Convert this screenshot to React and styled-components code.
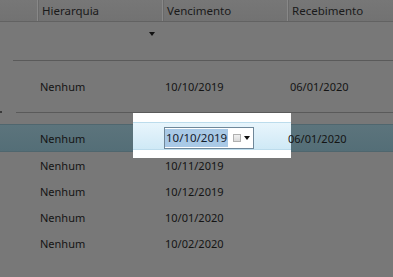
import React from "react";
import styled, { createGlobalStyle } from "styled-components";

const Global = createGlobalStyle`
  html, body { margin: 0; padding: 0; background: #787878; overflow: hidden; }
  body { font-family: "Noto Sans", "Open Sans", sans-serif; font-size: 11px; color: #141414; }
`;

const Page = styled.div`
  width: 393px;
  height: 277px;
  background: #787878;
  position: relative;
  overflow: hidden;
`;

const cols = "37px 125px 125px 1fr";

const Header = styled.div`
  display: grid;
  grid-template-columns: ${cols};
  height: 21px;
  background: linear-gradient(#777 0%, #727272 100%);
  border-bottom: 1px solid #626262;
`;

const HeadCell = styled.div`
  display: flex;
  align-items: center;
  padding-left: 4px;
  border-left: ${(p) => (p.$first ? "none" : "1px solid #888")};
  box-shadow: ${(p) => (p.$first ? "none" : "inset 1px 0 0 #6a6a6a")};
  color: #1a1a1a;
  font-size: 11.5px;
`;

const FilterRow = styled.div`
  display: grid;
  grid-template-columns: ${cols};
  height: 38px;
`;

const FilterCell = styled.div`
  position: relative;
`;

const DropArrow = styled.div`
  margin: 10px 0 0 112px;
  width: 0;
  height: 0;
  border-left: 3.5px solid transparent;
  border-right: 3.5px solid transparent;
  border-top: 4px solid #111;
`;

const Rule = styled.div`
  height: 1px;
  background: #5a5a5a;
  margin-left: ${(p) => p.$indent}px;
`;

const Row = styled.div`
  display: grid;
  grid-template-columns: ${cols};
  height: ${(p) => p.$h}px;
  align-items: center;
  position: relative;
`;

const Cell = styled.div`
  padding-left: ${(p) => p.$pad ?? 3}px;
  white-space: nowrap;
  position: relative;
  z-index: 2;
`;

const Dot = styled.div`
  position: absolute;
  left: 0;
  top: -1px;
  width: 2px;
  height: 2px;
  background: #3a3a3a;
`;

const GroupWrap = styled.div`
  position: relative;
`;

const Gap = styled.div`
  height: 11px;
`;

const SelectedRow = styled(Row)`
  background: linear-gradient(#5c747c, #546e77);
  border-top: 1px solid #4f666e;
  border-bottom: 1px solid #4f666e;
  height: 26px;
`;

const Spotlight = styled.div`
  position: absolute;
  left: 133px;
  top: -12px;
  width: 158px;
  height: 45px;
  background: #fff;
  z-index: 1;
  display: flex;
  flex-direction: column;
  justify-content: center;
`;

const SpotBand = styled.div`
  height: 26px;
  background: linear-gradient(#e8f5fc, #cfe9f6);
  border-top: 1px solid #bcdcec;
  border-bottom: 1px solid #bcdcec;
`;

const Editor = styled.div`
  display: inline-flex;
  align-items: center;
  width: 90px;
  height: 22px;
  box-sizing: border-box;
  border: 1px solid #6f8799;
  background: #fff;
  margin-left: 2px;
  position: relative;
`;

const Selected = styled.span`
  background: #a9c9e6;
  color: #16202c;
  font-size: 11.5px;
  padding: 0 1px;
  line-height: 18px;
  margin-left: 0;
`;

const CalIcon = styled.span`
  width: 8px;
  height: 8px;
  margin-left: 5px;
  border: 1px solid #b0b0b0;
  background: linear-gradient(#f0f0f0, #dadada);
  box-sizing: border-box;
`;

const EditArrow = styled.span`
  margin-left: 3px;
  width: 0;
  height: 0;
  border-left: 3.5px solid transparent;
  border-right: 3.5px solid transparent;
  border-top: 4px solid #111;
`;

const dates = ["10/11/2019", "10/12/2019", "10/01/2020", "10/02/2020"];

export default function App() {
  return (
    <Page>
      <Global />
      <Header>
        <HeadCell $first />
        <HeadCell>Hierarquia</HeadCell>
        <HeadCell>Vencimento</HeadCell>
        <HeadCell>Recebimento</HeadCell>
      </Header>
      <FilterRow>
        <FilterCell />
        <FilterCell>
          <DropArrow />
        </FilterCell>
        <FilterCell />
        <FilterCell />
      </FilterRow>
      <Rule $indent={13} />
      <Row $h={51}>
        <Cell />
        <Cell>Nenhum</Cell>
        <Cell>10/10/2019</Cell>
        <Cell>06/01/2020</Cell>
      </Row>
      <GroupWrap>
        <Rule $indent={16} />
        <Dot />
      </GroupWrap>
      <Gap />
      <SelectedRow $h={26}>
        <Spotlight>
          <SpotBand />
        </Spotlight>
        <Cell />
        <Cell>Nenhum</Cell>
        <Cell $pad={0}>
          <Editor>
            <Selected>10/10/2019</Selected>
            <CalIcon />
            <EditArrow />
          </Editor>
        </Cell>
        <Cell $pad={1}>06/01/2020</Cell>
      </SelectedRow>
      {dates.map((d) => (
        <Row $h={26} key={d}>
          <Cell />
          <Cell>Nenhum</Cell>
          <Cell>{d}</Cell>
          <Cell />
        </Row>
      ))}
    </Page>
  );
}
